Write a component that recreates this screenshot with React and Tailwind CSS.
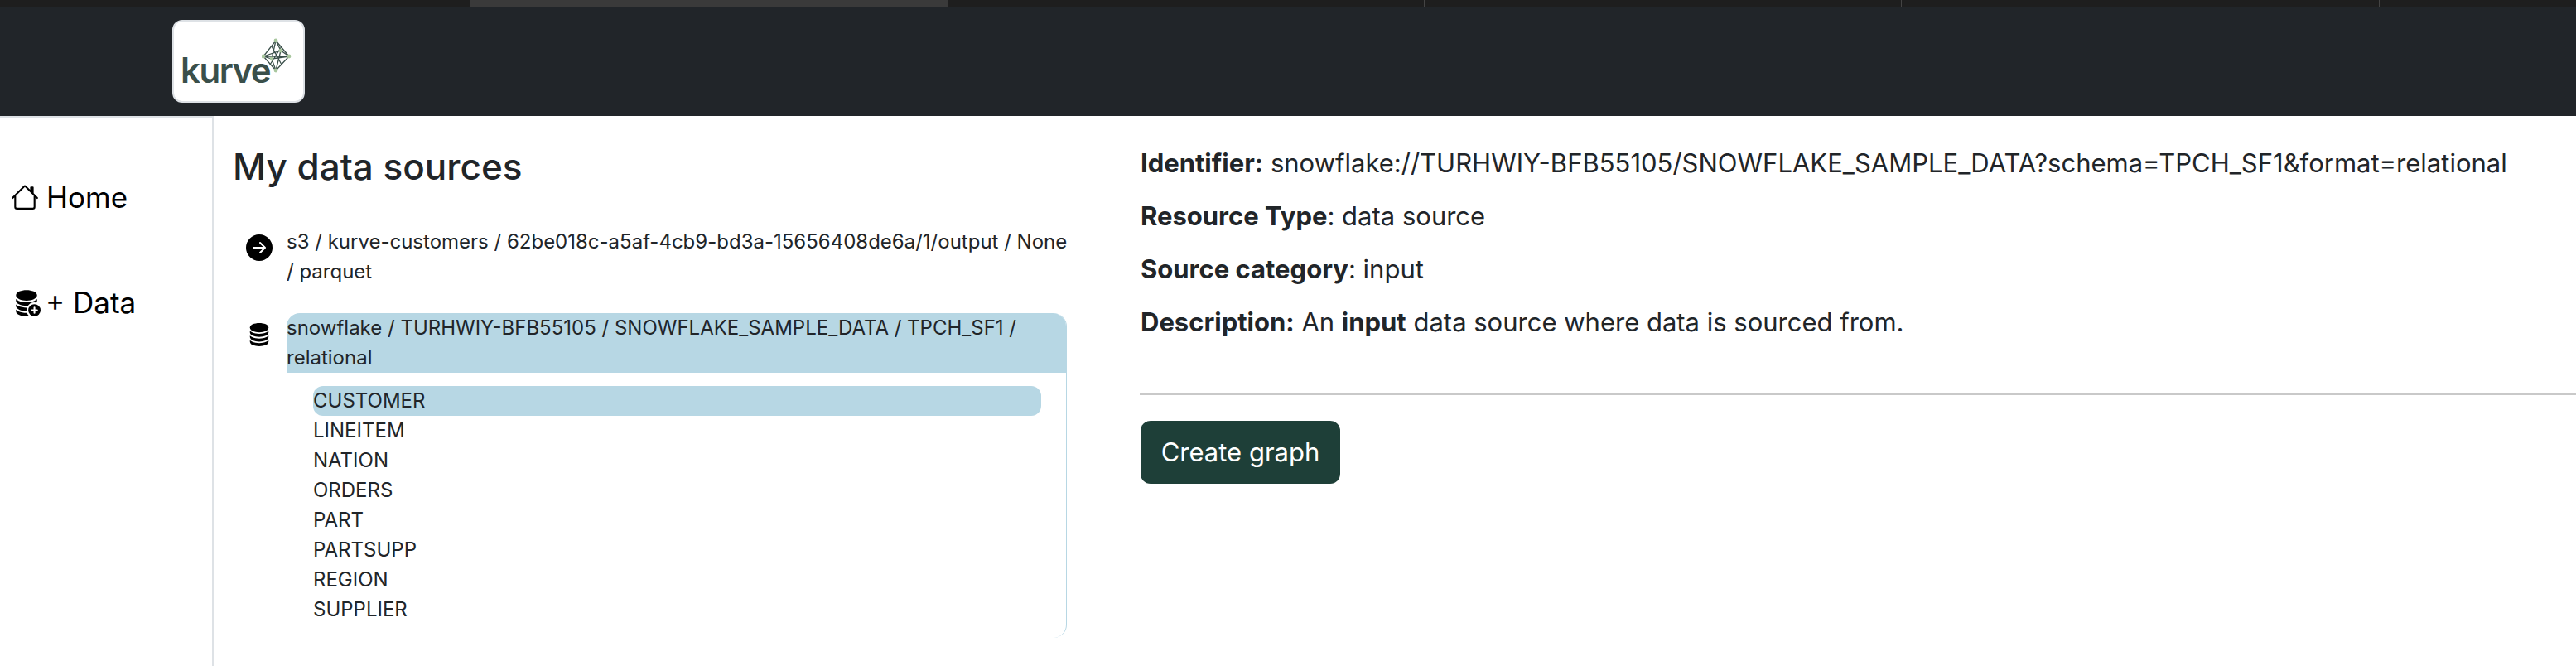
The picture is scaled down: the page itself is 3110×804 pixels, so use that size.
import { BsHouse, BsDatabaseFill, BsDatabaseFillAdd, BsArrowRightCircleFill } from 'react-icons/bs';

const TABLES = ['CUSTOMER', 'LINEITEM', 'NATION', 'ORDERS', 'PART', 'PARTSUPP', 'REGION', 'SUPPLIER'];

const NODES = [[17, 3], [33, 22], [17, 39], [2, 22], [23, 15], [12, 25]];

function LogoMark() {
  return (
    <svg width="36" height="42" viewBox="0 0 36 42" className="shrink-0">
      <g stroke="#3a4f4a" strokeWidth="1.3" fill="none">
        <path d="M17 3 33 22 17 39 2 22Z" />
        <path d="M2 22 33 22M17 3 12 25 17 39M17 3 23 15 17 39M2 22 23 15 33 22M2 22 12 25 33 22M12 10 24 32M24 10 10 32" />
      </g>
      {NODES.map(([cx, cy]) => (
        <circle key={`${cx}-${cy}`} cx={cx} cy={cy} r="2.4" fill="#a9c79f" />
      ))}
    </svg>
  );
}

function Logo() {
  return (
    <div className="flex h-[100px] w-[160px] items-start rounded-[12px] border-2 border-[#dee2e6] bg-white pl-[8px]">
      <span className="mt-[34px] text-[42px] leading-[50px] font-semibold tracking-[-1.5px] text-[#3a4f4a]">kurve</span>
      <div className="mt-[20px] -ml-[10px]">
        <LogoMark />
      </div>
    </div>
  );
}

function Sidebar() {
  return (
    <aside className="h-[664px] w-[258px] shrink-0 border-t-2 border-r-2 border-[#dee2e6] pl-[13px] text-[35px] leading-[48px] text-black">
      <div className="mt-[72px] flex items-center gap-[9px]">
        <BsHouse className="size-[34px]" />
        <span>Home</span>
      </div>
      <div className="mt-[79px] flex items-center gap-[6px] pl-[2px]">
        <BsDatabaseFillAdd className="size-[34px]" />
        <span>+ Data</span>
      </div>
    </aside>
  );
}

function SourceList() {
  return (
    <div className="text-[24px] leading-[36px] text-[#212529]">
      <div className="flex">
        <div className="flex w-[65px] shrink-0 justify-center pt-[9px] pr-[1px]">
          <BsArrowRightCircleFill className="size-[32px] text-black" />
        </div>
        <div className="w-[950px]">s3 / kurve-customers / 62be018c-a5af-4cb9-bd3a-15656408de6a/1/output / None / parquet</div>
      </div>
      <div className="mt-[32px] flex">
        <div className="flex w-[65px] shrink-0 justify-center pt-[10px] pr-[1px]">
          <BsDatabaseFill className="size-[30px] text-black" />
        </div>
        <div className="w-[942px] rounded-[16px] border-r border-[#b7d7e4]">
          <div className="rounded-t-[16px] bg-[#b7d7e4]">snowflake / TURHWIY-BFB55105 / SNOWFLAKE_SAMPLE_DATA / TPCH_SF1 / relational</div>
          <ul className="pt-[16px] pr-[30px] pb-[16px] pl-[32px]">
            {TABLES.map((name, i) => (
              <li key={name} className={i === 0 ? 'rounded-[12px] bg-[#b7d7e4]' : ''}>{name}</li>
            ))}
          </ul>
        </div>
      </div>
    </div>
  );
}

function Details() {
  return (
    <section className="min-w-0 flex-1 pt-[34px] text-[31px] leading-[46px] text-[#212529]">
      <div className="flex flex-col gap-[18px] pl-[1px]">
        <p className="whitespace-nowrap"><strong className="font-bold">Identifier:</strong> snowflake://TURHWIY-BFB55105/SNOWFLAKE_SAMPLE_DATA?schema=TPCH_SF1&amp;format=relational</p>
        <p><strong className="font-bold">Resource Type</strong>: data source</p>
        <p><strong className="font-bold">Source category</strong>: input</p>
        <p><strong className="font-bold">Description:</strong> An <strong className="font-bold">input</strong> data source where data is sourced from.</p>
      </div>
      <hr className="mt-[63px] border-t-2 border-[#c9c9c9]" />
      <button className="mt-[31px] ml-[1px] h-[76px] w-[241px] rounded-[12px] bg-[#1e3f38] text-white">Create graph</button>
    </section>
  );
}

export default function App() {
  return (
    <div className="h-[804px] w-[3110px] overflow-hidden bg-white font-['Inter',sans-serif]">
      <div className="flex h-[9px] border-b border-black bg-[#1e1e1e]">
        <div className="ml-[567px] w-[577px] bg-[#3a3a3a]" />
        <div className="w-[576px] border-r border-[#444444]" />
        <div className="w-[576px] border-r border-[#444444]" />
        <div className="w-[577px] border-r border-[#444444]" />
      </div>
      <header className="h-[131px] bg-[#212529] pt-[15px] pl-[208px]">
        <Logo />
      </header>
      <div className="flex">
        <Sidebar />
        <main className="flex flex-1 pl-[23px]">
          <div className="w-[1095px] shrink-0 pt-[28px]">
            <h1 className="mb-[40px] text-[44px] leading-[66px] font-medium text-[#212529]">My data sources</h1>
            <SourceList />
          </div>
          <Details />
        </main>
      </div>
    </div>
  );
}
